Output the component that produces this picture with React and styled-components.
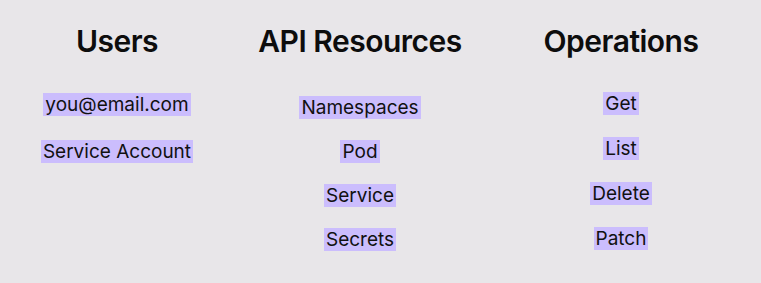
import styled, { createGlobalStyle } from "styled-components"

const GlobalStyle = createGlobalStyle`
  html, body {
    margin: 0;
    padding: 0;
    background: #e8e6e9;
  }
  body {
    font-family: Inter, "Noto Sans", sans-serif;
    color: #111;
  }
`

const columns = [
  { title: "Users", items: ["you@email.com", "Service Account"], top: 34, gap: 24 },
  { title: "API Resources", items: ["Namespaces", "Pod", "Service", "Secrets"], top: 37, gap: 21 },
  { title: "Operations", items: ["Get", "List", "Delete", "Patch"], top: 33, gap: 22 },
]

export default function App() {
  return (
    <>
      <GlobalStyle />
      <Board>
        {columns.map((col) => (
          <Column key={col.title}>
            <Heading>{col.title}</Heading>
            <ItemList $top={col.top} $gap={col.gap}>
              {col.items.map((item) => (
                <Tag key={item}>{item}</Tag>
              ))}
            </ItemList>
          </Column>
        ))}
      </Board>
    </>
  )
}

const Board = styled.main`
  width: 761px;
  height: 283px;
  box-sizing: border-box;
  padding-top: 23px;
  display: grid;
  grid-template-columns: 234px 252px 270px;
  align-items: start;
  background: #e8e6e9;
`

const Column = styled.section`
  display: flex;
  flex-direction: column;
  align-items: center;
`

const Heading = styled.h2`
  margin: 0;
  font-size: 30px;
  font-weight: 600;
  line-height: 36px;
  letter-spacing: -0.5px;
  color: #0d0d0d;
`

const ItemList = styled.div`
  margin-top: ${(p) => p.$top}px;
  display: flex;
  flex-direction: column;
  align-items: center;
  gap: ${(p) => p.$gap}px;
`

const Tag = styled.span`
  display: inline-block;
  background: #cbbdfd;
  padding: 0 2px;
  font-size: 19px;
  font-weight: 400;
  line-height: 23px;
  color: #111;
`
